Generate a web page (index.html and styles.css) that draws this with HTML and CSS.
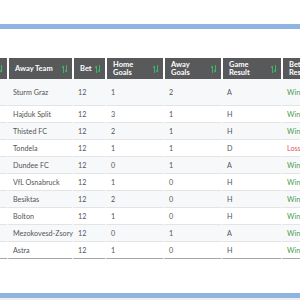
FILE: index.html
```html
<!DOCTYPE html>
<html lang="en">
<head>
    <meta charset="UTF-8">
    <title>Bets</title>
    <link rel="stylesheet" href="styles.css">
</head>
<body>
    <div class="bar"></div>
    <div class="scroller">
        <table class="bets">
            <colgroup>
                <col class="c-home"><col class="c-away"><col class="c-bet"><col class="c-hg"><col class="c-ag"><col class="c-gr"><col class="c-br">
            </colgroup>
            <thead>
                <tr>
                    <th><div class="th">Home Team<span class="sort"></span></div></th>
                    <th><div class="th">Away Team<span class="sort"></span></div></th>
                    <th><div class="th">Bet<span class="sort"></span></div></th>
                    <th><div class="th">Home<br>Goals<span class="sort"></span></div></th>
                    <th><div class="th">Away<br>Goals<span class="sort"></span></div></th>
                    <th><div class="th">Game<br>Result<span class="sort"></span></div></th>
                    <th><div class="th">Bet<br>Result<span class="sort"></span></div></th>
                </tr>
            </thead>
            <tbody>
                <tr class="tall"><td></td><td>Sturm Graz</td><td>12</td><td>1</td><td>2</td><td>A</td><td class="win">Win</td></tr>
                <tr><td></td><td>Hajduk Split</td><td>12</td><td>3</td><td>1</td><td>H</td><td class="win">Win</td></tr>
                <tr><td></td><td>Thisted FC</td><td>12</td><td>2</td><td>1</td><td>H</td><td class="win">Win</td></tr>
                <tr><td></td><td>Tondela</td><td>12</td><td>1</td><td>1</td><td>D</td><td class="loss">Loss</td></tr>
                <tr><td></td><td>Dundee FC</td><td>12</td><td>0</td><td>1</td><td>A</td><td class="win">Win</td></tr>
                <tr><td></td><td>VfL Osnabruck</td><td>12</td><td>1</td><td>0</td><td>H</td><td class="win">Win</td></tr>
                <tr><td></td><td>Besiktas</td><td>12</td><td>2</td><td>0</td><td>H</td><td class="win">Win</td></tr>
                <tr><td></td><td>Bolton</td><td>12</td><td>1</td><td>0</td><td>H</td><td class="win">Win</td></tr>
                <tr><td></td><td>Mezokovesd-Zsory</td><td>12</td><td>0</td><td>1</td><td>A</td><td class="win">Win</td></tr>
                <tr><td></td><td>Astra</td><td>12</td><td>1</td><td>0</td><td>H</td><td class="win">Win</td></tr>
            </tbody>
        </table>
    </div>
    <div class="bar bottom"></div>
    <div class="foot"></div>
</body>
</html>
```

FILE: styles.css
```css
*{
    margin:0;
    padding:0;
    box-sizing:border-box;
}
body{
    background:#fff;
    font-family:Lato, "Open Sans", sans-serif;
    padding-top:24px;
}
.bar{
    height:5px;
    background:#8fb4e2;
}
.bar.bottom{
    margin-top:34px;
}
.foot{
    height:10px;
    background:#eeeeee;
}
.scroller{
    width:300px;
    overflow:hidden;
    margin-top:29px;
}
table.bets{
    margin-left:-63px;
    width:404px;
    table-layout:fixed;
    border-collapse:separate;
    border-spacing:0;
    font-size:7.2px;
    color:#555;
}
col.c-home{width:70px;}
col.c-away{width:65px;}
col.c-bet{width:33px;}
col.c-hg{width:58px;}
col.c-ag{width:58px;}
col.c-gr{width:60px;}
col.c-br{width:60px;}

table.bets th{
    height:21px;
    background:#58595b;
    border-left:2px solid #fff;
    color:#fff;
    font-weight:bold;
    font-size:7.5px;
    text-align:left;
    padding:0 4px 0 6px;
    line-height:8px;
    vertical-align:middle;
}
.th{
    display:flex;
    align-items:center;
    justify-content:space-between;
}
.sort{
    width:6px;
    height:8px;
    flex:none;
    background:
        linear-gradient(#3fb56a,#3fb56a) 1px 1px/1px 7px no-repeat,
        linear-gradient(#3fb56a,#3fb56a) 4px 0/1px 7px no-repeat;
    position:relative;
}
.sort::before,.sort::after{
    content:"";
    position:absolute;
    border-left:1.5px solid transparent;
    border-right:1.5px solid transparent;
}
.sort::before{
    left:0;
    top:0;
    border-bottom:3px solid #3fb56a;
}
.sort::after{
    left:3px;
    bottom:0;
    border-top:3px solid #3fb56a;
}
table.bets td{
    height:17px;
    border-left:2px solid transparent;
    border-bottom:1px solid #e3e4e6;
    padding:0 4px;
    white-space:nowrap;
}
table.bets tbody tr:nth-child(odd) td{
    background:#f7f8fa;
}
table.bets tr.tall td{
    height:27px;
}
table.bets tbody tr:last-child td{
    border-bottom:1px solid #a5a5a5;
}
td.win{
    color:#4c9a4c;
}
td.loss{
    color:#e2555f;
}
```
